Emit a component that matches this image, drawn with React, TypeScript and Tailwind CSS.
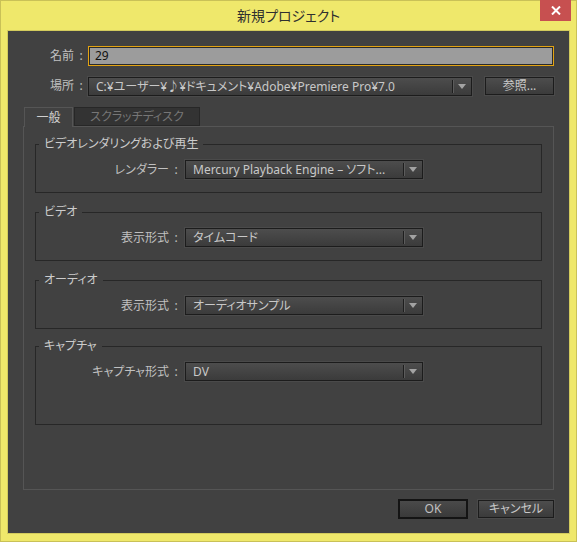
import React from "react";

const uiFont = "font-['Noto_Sans','Noto_Sans_CJK_JP',sans-serif]";

function Arrow() {
  return (
    <svg width="8" height="5" viewBox="0 0 8 5">
      <path d="M0 0h8L4 5z" fill="#a3a3a3" />
    </svg>
  );
}

function Label({ text, className }: { text: string; className: string }) {
  return (
    <span
      className={`flex justify-end text-[12px] text-[#c0c0c0] [font-feature-settings:'palt'] ${className}`}
    >
      <span>{text}</span>
      <span className="w-[14px] text-center">:</span>
    </span>
  );
}

function Select({ value, className }: { value: string; className: string }) {
  return (
    <div
      className={`flex h-[19px] items-stretch border border-[#1c1c1c] bg-gradient-to-b from-[#4d4d4d] to-[#3b3b3b] shadow-[0_0_0_1px_#4a4a4a] ${className}`}
    >
      <span className="flex-1 overflow-hidden whitespace-nowrap pl-[7px] text-[12px] leading-[17px] text-[#c8c8c8] [font-feature-settings:'palt']">
        {value}
      </span>
      <span className="my-[2px] w-px bg-[#1e1e1e] shadow-[1px_0_0_#5c5c5c]" />
      <span className="flex w-[18px] items-center justify-center">
        <Arrow />
      </span>
    </div>
  );
}

function Group({
  title,
  label,
  value,
  className,
}: {
  title: string;
  label: string;
  value: string;
  className: string;
}) {
  return (
    <fieldset className={`border border-[#272727] ${className}`}>
      <legend className="ml-[3px] px-[5px] text-[12px] leading-[14px] text-[#cccccc] [font-feature-settings:'palt']">
        {title}
      </legend>
      <div className="flex items-center pt-[9px]">
        <Label text={label} className="mr-[2px] w-[147px] leading-[19px]" />
        <Select value={value} className="w-[238px]" />
      </div>
    </fieldset>
  );
}

export default function App() {
  return (
    <div
      className={`flex h-[542px] w-[577px] flex-col border border-[#c9c157] bg-[#efe86b] ${uiFont}`}
    >
      <div className="relative flex h-[29px] items-center justify-center">
        <span className="text-[14px] text-[#2f2f2f] [font-feature-settings:'palt']">
          新規プロジェクト
        </span>
        <button className="absolute right-[5px] top-[-1px] flex h-[21px] w-[31px] items-center justify-center bg-[#c75050]">
          <svg width="10" height="9" viewBox="0 0 10 9">
            <path d="M1 0.5l8 8M9 0.5l-8 8" stroke="#fff" strokeWidth="2" />
          </svg>
        </button>
      </div>

      <div className="mx-[6px] flex flex-1 flex-col border border-[#d3cb5d] bg-[#414141]">
        <div className="mt-[15px] flex h-[20px] items-center pr-[15px]">
          <Label text="名前" className="w-[80px]" />
          <div className="flex h-[20px] flex-1 items-center border border-[#e3a312] bg-[#9c9c9c] pl-[6px] shadow-[inset_0_0_0_1px_#2a2a2a] text-[12px] text-[#111]">
            29
          </div>
        </div>

        <div className="mt-[11px] flex h-[18px] items-center pr-[15px]">
          <Label text="場所" className="w-[80px]" />
          <Select
            value="C:¥ユーザー¥♪¥ドキュメント¥Adobe¥Premiere Pro¥7.0"
            className="h-[18px] w-[384px]"
          />
          <button className="ml-[13px] h-[18px] flex-1 border border-[#1c1c1c] bg-gradient-to-b from-[#4d4d4d] to-[#3b3b3b] text-[12px] leading-[16px] text-[#c8c8c8] shadow-[0_0_0_1px_#4a4a4a]">
            参照...
          </button>
        </div>

        <div className="mt-[12px] flex h-[19px] items-start pl-[16px]">
          <div className="relative z-10 flex h-[20px] w-[49px] justify-center border border-b-0 border-[#555] bg-[#414141] pt-[2px] text-[12px] leading-[15px] text-[#d0d0d0]">
            一般
          </div>
          <div className="ml-px flex h-[19px] w-[126px] justify-center border border-[#272727] bg-[#333] pt-[1px] text-[12px] leading-[15px] text-[#767676] [font-feature-settings:'palt']">
            スクラッチディスク
          </div>
        </div>

        <div className="mx-[15px] flex h-[364px] flex-col border border-[#555] px-[11px] pt-[10px]">
          <Group
            title="ビデオレンダリングおよび再生"
            label="レンダラー"
            value="Mercury Playback Engine – ソフト..."
            className="pb-[13px]"
          />
          <Group
            title="ビデオ"
            label="表示形式"
            value="タイムコード"
            className="mt-[12px] pb-[13px]"
          />
          <Group
            title="オーディオ"
            label="表示形式"
            value="オーディオサンプル"
            className="mt-[12px] pb-[13px]"
          />
          <Group
            title="キャプチャ"
            label="キャプチャ形式"
            value="DV"
            className="mt-[10px] pb-[43px]"
          />
        </div>

        <div className="mt-[9px] flex items-center justify-end gap-[10px] pr-[15px]">
          <button className="h-[20px] w-[70px] border-2 border-[#141414] bg-gradient-to-b from-[#4a4a4a] to-[#3a3a3a] text-[12px] leading-[16px] text-[#c0c0c0]">
            OK
          </button>
          <button className="h-[18px] w-[76px] border border-[#1c1c1c] bg-gradient-to-b from-[#4d4d4d] to-[#3b3b3b] text-[12px] leading-[16px] text-[#c8c8c8] shadow-[0_0_0_1px_#4a4a4a] [font-feature-settings:'palt']">
            キャンセル
          </button>
        </div>
      </div>
      <div className="h-[7px]" />
    </div>
  );
}
